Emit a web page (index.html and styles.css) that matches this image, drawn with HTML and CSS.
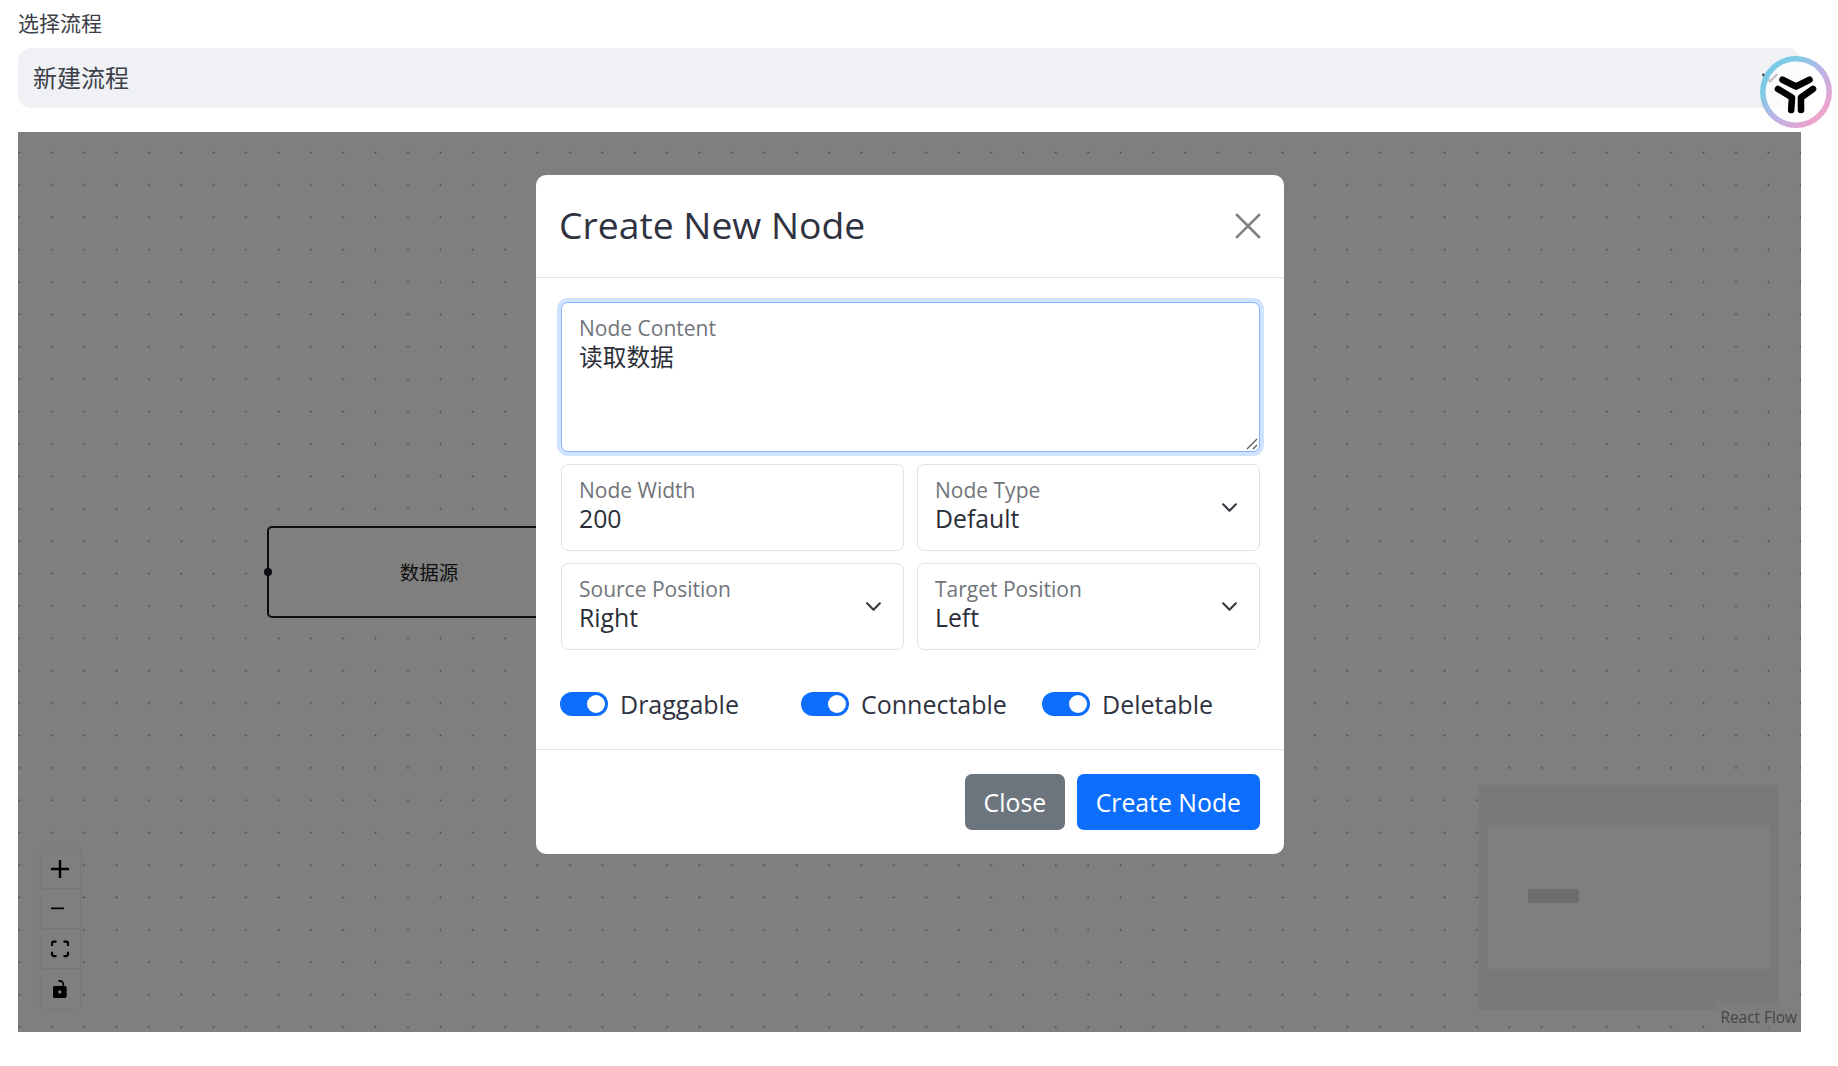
FILE: index.html
```html
<!DOCTYPE html>
<html lang="zh">
<head>
<meta charset="utf-8">
<title>选择流程</title>
<link rel="stylesheet" href="styles.css">
</head>
<body>
<main class="page">
  <label class="page-label">选择流程</label>
  <div class="flow-select">
    <span>新建流程</span>
    <svg class="flow-chevron" viewBox="0 0 16 16"><path d="M2 5l6 6 6-6" fill="none" stroke="#343a40" stroke-width="2" stroke-linecap="round" stroke-linejoin="round"/></svg>
  </div>
  <section class="canvas">
    <div class="node"><span class="handle"></span>数据源</div>
    <div class="controls">
      <div class="ctl"><svg viewBox="0 0 32 32" class="ctl-icon"><path d="M32 18.133H18.133V32h-4.266V18.133H0v-4.266h13.867V0h4.266v13.867H32z"/></svg></div>
      <div class="ctl"><svg viewBox="0 0 32 5" class="ctl-icon ctl-minus"><path d="M0 0h32v4.2H0z"/></svg></div>
      <div class="ctl"><svg viewBox="0 0 32 30" class="ctl-icon"><path d="M3.692 4.63c0-.53.4-.938.939-.938h5.215V0H4.708C2.13 0 0 2.054 0 4.63v5.216h3.692V4.631zM27.354 0h-5.2v3.692h5.17c.53 0 .984.4.984.939v5.215H32V4.631A4.624 4.624 0 0027.354 0zm.954 24.83c0 .532-.4.94-.939.94h-5.215v3.768h5.215c2.577 0 4.631-2.13 4.631-4.707v-5.139h-3.692v5.139zm-23.677.94c-.531 0-.939-.4-.939-.94v-5.138H0v5.139c0 2.577 2.13 4.707 4.708 4.707h5.138V25.77H4.631z"/></svg></div>
      <div class="ctl"><svg viewBox="0 0 25 32" class="ctl-icon"><path d="M21.333 10.667H19.81V7.619C19.81 3.429 16.38 0 12.19 0c-1.105 0-2.133.229-3.086.648l1.143 2.743c.61-.267 1.257-.419 1.943-.419 2.59 0 4.647 2.095 4.647 4.647v3.048H3.048A3.056 3.056 0 000 13.714v15.238A3.056 3.056 0 003.048 32h18.285a3.056 3.056 0 003.048-3.048V13.714a3.056 3.056 0 00-3.048-3.047zM12.19 24.533a3.056 3.056 0 01-3.047-3.047 3.056 3.056 0 013.047-3.048 3.056 3.056 0 013.048 3.048 3.056 3.056 0 01-3.048 3.047z"/></svg></div>
    </div>
    <div class="minimap"><div class="minimap-view"><div class="minimap-node"></div></div></div>
    <div class="attribution">React Flow</div>
    <div class="overlay">
      <div class="modal">
        <header class="modal-header">
          <h5 class="modal-title">Create New Node</h5>
          <svg class="close-x" viewBox="0 0 26 26"><path d="M2 2l22 22M24 2L2 24" stroke="#808080" stroke-width="2.6" stroke-linecap="square" fill="none"/></svg>
        </header>
        <div class="modal-body">
          <div class="field field-area">
            <span class="field-label">Node Content</span>
            <span class="field-value field-cjk">读取数据</span>
            <svg class="grip" viewBox="0 0 12 12"><path d="M1 11L11 1M7 11l4-4" stroke="#555" stroke-width="1.2" fill="none"/></svg>
          </div>
          <div class="field-grid">
            <div class="field">
              <span class="field-label">Node Width</span>
              <span class="field-value">200</span>
            </div>
            <div class="field">
              <span class="field-label">Node Type</span>
              <span class="field-value">Default</span>
              <svg class="chev" viewBox="0 0 16 16"><path d="M2 5l6 6 6-6" fill="none" stroke="#343a40" stroke-width="2" stroke-linecap="round" stroke-linejoin="round"/></svg>
            </div>
            <div class="field">
              <span class="field-label">Source Position</span>
              <span class="field-value">Right</span>
              <svg class="chev" viewBox="0 0 16 16"><path d="M2 5l6 6 6-6" fill="none" stroke="#343a40" stroke-width="2" stroke-linecap="round" stroke-linejoin="round"/></svg>
            </div>
            <div class="field">
              <span class="field-label">Target Position</span>
              <span class="field-value">Left</span>
              <svg class="chev" viewBox="0 0 16 16"><path d="M2 5l6 6 6-6" fill="none" stroke="#343a40" stroke-width="2" stroke-linecap="round" stroke-linejoin="round"/></svg>
            </div>
          </div>
          <div class="switches">
            <div class="switch-item"><span class="switch"></span><span>Draggable</span></div>
            <div class="switch-item"><span class="switch"></span><span>Connectable</span></div>
            <div class="switch-item"><span class="switch"></span><span>Deletable</span></div>
          </div>
        </div>
        <footer class="modal-footer">
          <button class="btn btn-grey">Close</button>
          <button class="btn btn-blue">Create Node</button>
        </footer>
      </div>
    </div>
  </section>
</main>
<div class="logo">
  <svg viewBox="0 0 72 72">
    <defs>
      <linearGradient id="ring" x1="0" y1="0" x2="1" y2="1">
        <stop offset="0" stop-color="#74c7ec"/>
        <stop offset=".25" stop-color="#7fcbe4"/>
        <stop offset=".52" stop-color="#b9b4e8"/>
        <stop offset=".85" stop-color="#eda4cc"/>
        <stop offset="1" stop-color="#f0a3c8"/>
      </linearGradient>
    </defs>
    <circle cx="36" cy="36" r="33.2" fill="#fff" fill-opacity=".7" stroke="url(#ring)" stroke-width="5.6"/>
    <g stroke="#000" stroke-width="6.6" stroke-linecap="round" stroke-linejoin="round" fill="none">
      <path d="M22.5 23.7L36 30.5l13.5-6.8"/>
      <path d="M18 33l14 8.5-.8 12.5"/>
      <path d="M53 33l-12 8.5V54"/>
    </g>
  </svg>
</div>
</body>
</html>
```
FILE: styles.css
```css
* { box-sizing: border-box; }
html, body { margin: 0; height: 100%; overflow: hidden; background: #fff; }
body { font-family: "Open Sans", "Noto Sans CJK SC", sans-serif; color: #212529; }
.page { padding: 10px 37px 0 18px; display: flex; flex-direction: column; }
.page-label { font-size: 21px; line-height: 25px; color: #3d4048; font-family: "Noto Sans CJK SC", sans-serif; }
.flow-select { margin-top: 13px; height: 60px; background: #eff1f5; border-radius: 13px; display: flex; align-items: center; justify-content: space-between; padding: 0 22px 0 15px; font-size: 24px; color: #3d4048; font-family: "Noto Sans CJK SC", sans-serif; }
.flow-select span { padding-bottom: 4px; }
.flow-chevron { width: 18px; height: 18px; }
.canvas { position: relative; margin-top: 24px; height: 900px; background-color: #fff; background-image: radial-gradient(circle, #91919a .85px, transparent 1.1px); background-size: 32.4px 32.4px; background-position: -14.9px 4.3px; overflow: hidden; }
.node { position: absolute; left: 249px; top: 394px; width: 324px; height: 92px; border: 2px solid #1a192b; border-radius: 5px; display: flex; align-items: center; justify-content: center; padding-bottom: 2px; font-size: 19.5px; color: #222; font-family: "Noto Sans CJK SC", sans-serif; background: #fff; }
.handle { position: absolute; left: -5px; top: 50%; width: 8px; height: 8px; margin-top: -4px; border-radius: 50%; background: #1a192b; }
.controls { position: absolute; left: 23px; top: 717px; width: 39px; box-shadow: 0 0 3px rgba(0,0,0,.12); display: flex; flex-direction: column; background: #fefefe; }
.ctl { height: 40px; border-bottom: 1px solid #eee; display: flex; align-items: center; justify-content: center; padding-right: 1px; }
.ctl:last-child { border-bottom: 0; }
.ctl-icon { width: 18px; height: 18px; }
.ctl-minus { width: 13px; height: 3px; margin-right: 6px; }
.minimap { position: absolute; left: 1461px; top: 653px; width: 300px; height: 225px; background: #f2f2f2; padding: 42px 9px 0; }
.minimap-view { position: relative; width: 282px; height: 142px; background: #fff; }
.minimap-node { position: absolute; left: 40px; top: 62px; width: 51px; height: 14px; background: #dcdcdc; border-radius: 0 3px 3px 0; }
.attribution { position: absolute; right: 0; bottom: 0; padding: 4px 4px 3px; font-size: 15.4px; line-height: 23px; color: #8c8c8c; background: rgba(255,255,255,.5); }
.overlay { position: absolute; inset: 0; background: rgba(0,0,0,.5); display: flex; justify-content: center; align-items: flex-start; padding: 43px 0 0 1px; }
.modal { width: 748px; height: 679px; background: #fff; border-radius: 10px; display: flex; flex-direction: column; }
.modal-header { height: 103px; border-bottom: 1px solid #dee2e6; display: flex; align-items: center; justify-content: space-between; padding: 0 23px 2px 23px; flex: none; }
.modal-title { margin: 0; font-size: 37.3px; font-weight: 400; color: #2f3241; line-height: 44px; }
.close-x { width: 26px; height: 26px; margin-top: 2px; }
.modal-body { padding: 24px 24px 0 25px; flex: 1; }
.field { position: relative; border: 1px solid #dee2e6; border-radius: 7px; height: 87px; padding: 12px 17px 0; display: flex; flex-direction: column; background: #fff; }
.field-area { height: 150px; border-color: #86b7fe; box-shadow: 0 0 0 4px #d0e2fe; margin-bottom: 12px; }
.field-label { font-size: 21px; line-height: 27px; color: #71757b; }
.field-value { font-size: 24.8px; line-height: 30px; color: #2b2e38; margin-top: -1px; }
.field-cjk { font-size: 23.7px; font-family: "Noto Sans CJK SC", sans-serif; }
.grip { position: absolute; right: 1px; bottom: 1px; width: 12px; height: 12px; }
.chev { position: absolute; right: 21px; top: 34px; width: 17px; height: 17px; }
.field-grid { display: grid; grid-template-columns: 1fr 1fr; column-gap: 13px; row-gap: 12px; }
.switches { display: flex; gap: 37px; margin: 39px 0 0 -1px; align-items: center; }
.switch-item { display: flex; flex: none; align-items: center; gap: 12px; width: 204px; font-size: 25px; line-height: 30px; color: #2f3241; white-space: nowrap; }
.switch { position: relative; width: 48px; height: 24px; background: #0d6efd; border-radius: 12px; flex: none; }
.switch::after { content: ""; position: absolute; right: 3px; top: 3px; width: 18px; height: 18px; border-radius: 50%; background: #fff; }
.modal-footer { height: 105px; border-top: 1px solid #dee2e6; display: flex; justify-content: flex-end; align-items: center; gap: 12px; padding: 0 24px; flex: none; }
.btn { border: 0; height: 56px; border-radius: 7px; color: #fff; font: 400 24.8px "Open Sans", sans-serif; padding: 0 19px; }
.btn-grey { background: #6c757d; padding: 0 18.5px; }
.btn-blue { background: #0d6efd; }
.logo { position: absolute; left: 1760px; top: 56px; width: 72px; height: 72px; }
.logo svg { display: block; width: 72px; height: 72px; }
```
